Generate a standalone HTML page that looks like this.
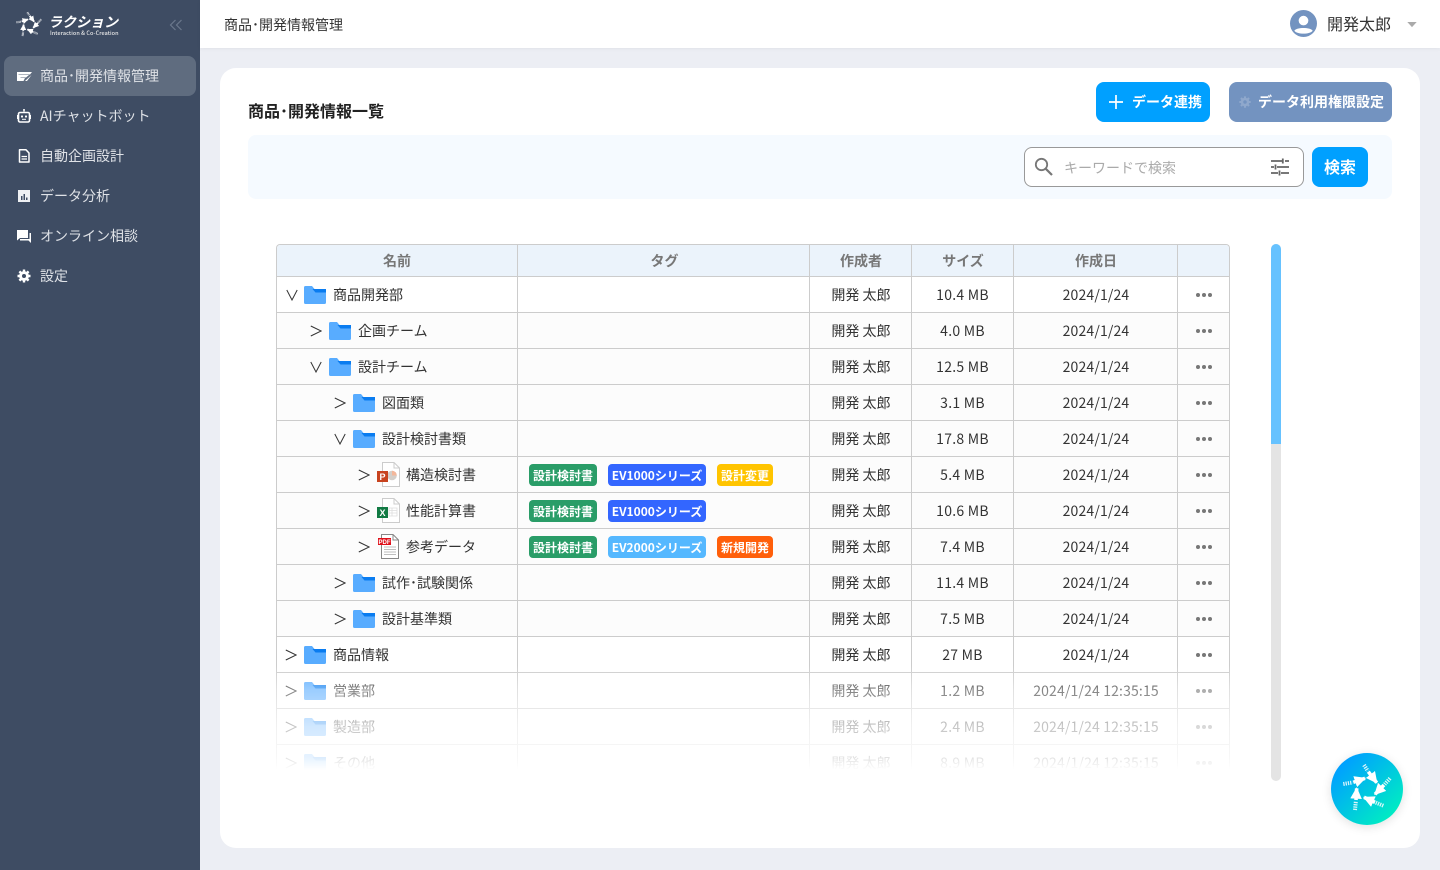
<!DOCTYPE html>
<html lang="ja"><head><meta charset="utf-8"><title>商品・開発情報管理</title>
<style>
*{box-sizing:border-box}
html,body{margin:0;padding:0;width:1440px;height:870px;overflow:hidden;background:#eceef4;font-family:"Noto Sans CJK JP","Liberation Sans",sans-serif;color:#333}
.a{position:absolute}
#side{left:0;top:0;width:200px;height:870px;background:#3e4c63}
.nav{position:absolute;left:40px;font-size:14px;line-height:20px;color:#dfe2e7;white-space:nowrap}
.ic{position:absolute;left:16px;width:16px;height:16px}
#top{left:200px;top:0;width:1240px;height:48px;background:#fff;box-shadow:0 1px 4px rgba(0,0,0,.05)}
#card{left:220px;top:68px;width:1200px;height:780px;background:#fff;border-radius:16px}
.btn{position:absolute;border-radius:8px;color:#fff;font-weight:700;font-size:14px;line-height:41px;white-space:nowrap}
#tbl{left:276px;top:244px;width:954px;height:526px;overflow:hidden;border:1px solid #ccc;border-bottom:0;border-radius:4px 4px 0 0}
.hd{position:absolute;top:0;left:0;width:952px;height:32px;background:#ebf3fb}
.hc{position:absolute;top:0;height:32px;line-height:32px;text-align:center;font-size:14px;font-weight:700;color:#777}
.v{position:absolute;top:0;width:1px;height:526px;background:#ccc;z-index:2}
.r{position:absolute;left:0;width:952px;height:36px;background:#fcfcfc;border-top:1px solid #ccc;font-size:14px;line-height:37px}
.r.w{background:#fff}
.r span{position:absolute;top:0;white-space:nowrap}
.c1{left:533.500px;width:101px;text-align:center}
.c2{left:635px;width:101px;text-align:center;letter-spacing:.25px}
.c3{left:737.500px;width:163px;text-align:center;letter-spacing:.15px}
.d{top:16px!important;width:4px;height:4px;border-radius:2px;background:#777}
.d1{left:919px}.d2{left:925px}.d3{left:931px}
.t{height:22px;top:7px!important;border-radius:4px;color:#fff;font-size:12px;font-weight:700;line-height:24px;text-align:center}
.g{background:#2a9d68;left:252px;width:68px}
.b{background:#3366ff;left:331px;width:98px}
.l{background:#55b8ff;left:331px;width:98px}
.y{background:#ffc400;left:440px;width:56px}
.o{background:#ff5f0a;left:440px;width:56px}
.r svg{position:absolute}
#fade{left:276px;top:665px;width:954px;height:106px;background:linear-gradient(to bottom,rgba(255,255,255,0) 0,rgba(255,255,255,.4) 25px,rgba(255,255,255,.72) 62px,rgba(255,255,255,.85) 92px,rgba(255,255,255,1) 105px);z-index:3}
</style></head><body>
<svg width="0" height="0" style="position:absolute"><defs>
<symbol id="f" viewBox="0 0 22 18"><path d="M1.500 0H8l2.500 3H20.500a1.500 1.500 0 0 1 1.500 1.500V16.500a1.500 1.500 0 0 1-1.500 1.500H1.500A1.500 1.500 0 0 1 0 16.500V1.500A1.500 1.500 0 0 1 1.500 0z" fill="#58acff"/><path d="M8.500 3H22V6.500H11.500z" fill="#0a7cf0"/></symbol>
<symbol id="cr" viewBox="0 0 12 12"><path d="M.8 1 11.200 6 .8 11" fill="none" stroke="#333" stroke-width="1"/></symbol>
<symbol id="dn" viewBox="0 0 12 12"><path d="M.8 1 6 11 11.200 1" fill="none" stroke="#333" stroke-width="1"/></symbol>
<marker id="h" viewBox="0 0 10 10" refX="9" refY="5" markerWidth="3.200" markerHeight="3.200" orient="auto"><path d="M0 0 10 5 0 10z" fill="#fff"/></marker>
<symbol id="arrows" viewBox="0 0 72 72"><g fill="none" stroke="#fff">
<g stroke-width="3.600"><path d="M37.300 18.700 45.700 29.700" marker-end="url(#h)"/><path d="M53 32 44 41.300" marker-end="url(#h)"/><path d="M44 49.300 33 44.300" marker-end="url(#h)"/><path d="M25 47 25.700 35.300" marker-end="url(#h)"/><path d="M22.300 29.300 34 25.300" marker-end="url(#h)"/></g>
<g stroke-width="4" stroke-dasharray="1.300 1" opacity=".85"><path d="M33 12 36.800 18"/><path d="M59 25.300 53.700 31.300"/><path d="M52.300 52.700 44.800 49.600"/><path d="M24 57 24.900 47.800"/><path d="M12.300 31 21.500 29.500"/></g>
</g></symbol>
</defs></svg>

<div id="side" class="a">
<svg class="a" style="left:9.500px;top:6px" width="38" height="38"><use href="#arrows"/></svg>
<div class="a" style="left:48px;top:11px;font-size:14px;font-weight:700;font-style:italic;color:#fff;line-height:22px;white-space:nowrap">ラクション</div>
<div class="a" style="left:50px;top:30px;font-size:5.500px;font-weight:500;line-height:6px;letter-spacing:.08px;color:#e8e8e8;white-space:nowrap">Interaction &amp; Co-Creation</div>
<svg class="a" style="left:169px;top:18px" width="14" height="14" viewBox="0 0 14 14"><path d="M6.500 2 1.500 7l5 5M12.500 2l-5 5 5 5" fill="none" stroke="#6b788c" stroke-width="1.200"/></svg>
<div class="a" style="left:4px;top:56px;width:192px;height:40px;border-radius:8px;background:#5f6c7f"></div>
<svg class="a" style="left:17px;top:72px" width="15" height="9" viewBox="0 0 15 9"><path d="M0 0H15L13 2.500H1.500V3H12L9 5.500H3.500V6H8L6.500 9H0zM14.500 3 10 9H8z" fill="#fff"/></svg>
<div class="nav" style="top:66px">商品･開発情報管理</div>
<svg class="ic" style="top:108px" viewBox="0 0 16 16"><path d="M8 1v2.500M4 4.500h8A1.500 1.500 0 0 1 13.500 6v6.500A1.500 1.500 0 0 1 12 14H4a1.500 1.500 0 0 1-1.500-1.500V6A1.500 1.500 0 0 1 4 4.500z" fill="none" stroke="#fff" stroke-width="1.600"/><path d="M1 7h1.200v4H1zM13.800 7H15v4h-1.200z" fill="#fff"/><circle cx="6" cy="8.500" r="1.100" fill="#fff"/><circle cx="10" cy="8.500" r="1.100" fill="#fff"/><path d="M6 11.300h4" stroke="#fff"/></svg>
<div class="nav" style="top:106px">AIチャットボット</div>
<svg class="ic" style="top:148px" viewBox="0 0 16 16"><path d="M3.500 1.800H10L13 5v9H3.500z" fill="none" stroke="#fff" stroke-width="1.500" stroke-linejoin="round"/><path d="M5.500 8.500h5.500M5.500 11h5.500" stroke="#fff" stroke-width="1.200"/></svg>
<div class="nav" style="top:146px">自動企画設計</div>
<svg class="ic" style="top:188px" viewBox="0 0 16 16"><path d="M2 2h12v12H2z" fill="#eef0f3"/><path d="M5 8h1.500v4H5zM7.500 6h1.500v6H7.500zM10 9.500h1.500V12H10z" fill="#3e4c63"/></svg>
<div class="nav" style="top:186px">データ分析</div>
<svg class="ic" style="top:228px" viewBox="0 0 16 16"><path d="M1 2h11v8H4l-3 2.500z" fill="#fff"/><path d="M13.500 5H15v10l-2.500-2.500H4V11h9.500z" fill="#fff"/></svg>
<div class="nav" style="top:226px">オンライン相談</div>
<svg class="ic" style="top:268px" viewBox="0 0 16 16"><circle cx="8" cy="8" r="3.600" fill="none" stroke="#fff" stroke-width="2.600"/><path d="M8 1.500v13M1.500 8h13M3.400 3.400l9.200 9.200M12.600 3.400l-9.200 9.200" stroke="#fff" stroke-width="2.400"/><circle cx="8" cy="8" r="2" fill="#3e4c63"/></svg>
<div class="nav" style="top:266px">設定</div>
</div>

<div id="top" class="a">
<div class="a" style="left:24px;top:15px;font-size:14px;line-height:20px;white-space:nowrap">商品･開発情報管理</div>
<svg class="a" style="left:1090px;top:10px" width="27" height="27" viewBox="0 0 28 28"><circle cx="14" cy="14" r="14" fill="#7393c0"/><circle cx="14" cy="11" r="5" fill="#fff"/><path d="M4.500 21.500C7 17.800 21 17.800 23.500 21.500 21 25.500 7 25.500 4.500 21.500z" fill="#fff"/></svg>
<div class="a" style="left:1127px;top:11px;font-size:16px;line-height:24px;white-space:nowrap">開発太郎</div>
<svg class="a" style="left:1207px;top:22px" width="10" height="6" viewBox="0 0 11 7"><path d="M0 0h11L5.500 6z" fill="#aaa"/></svg>
</div>

<div id="card" class="a"></div>
<div class="a" style="left:248px;top:98px;font-size:16px;font-weight:700;line-height:24px;color:#222;white-space:nowrap">商品･開発情報一覧</div>
<div class="btn" style="left:1096px;top:82px;width:114px;height:40px;background:#00a0ff"><svg class="a" style="left:13px;top:13px" width="14" height="14" viewBox="0 0 14 14"><path d="M7 0v14M0 7h14" stroke="#fff" stroke-width="1.700"/></svg><span class="a" style="left:36px;top:0">データ連携</span></div>
<div class="btn" style="left:1229px;top:82px;width:163px;height:40px;background:#7393c0"><svg class="a" style="left:9px;top:13px" width="14" height="14" viewBox="0 0 16 16"><circle cx="8" cy="8" r="3.600" fill="none" stroke="#8fa8cc" stroke-width="2.600"/><path d="M8 1.500v13M1.500 8h13M3.400 3.400l9.200 9.200M12.600 3.400l-9.200 9.200" stroke="#8fa8cc" stroke-width="2.400"/><circle cx="8" cy="8" r="2" fill="#7393c0"/></svg><span class="a" style="left:29px;top:0">データ利用権限設定</span></div>
<div class="a" style="left:248px;top:135px;width:1144px;height:64px;border-radius:8px;background:#f5faff"></div>
<div class="a" style="left:1024px;top:147px;width:280px;height:40px;border:1px solid #999;border-radius:8px;background:#fff"></div>
<svg class="a" style="left:1034px;top:157px" width="20" height="20" viewBox="0 0 20 20"><circle cx="7.500" cy="7.500" r="5.700" fill="none" stroke="#777" stroke-width="1.800"/><path d="M11.800 11.800 18 18" stroke="#777" stroke-width="2.200"/></svg>
<div class="a" style="left:1064px;top:157.500px;font-size:14px;line-height:20px;color:#aaa;white-space:nowrap">キーワードで検索</div>
<svg class="a" style="left:1270px;top:158px" width="20" height="18" viewBox="0 0 20 18"><path d="M1 3h11M15 3h4M1 9h3M7 9h12M1 15h7M11 15h8" stroke="#666" stroke-width="1.800"/><path d="M12.800 .5v5M5.500 6.500v5M9.500 12.500v5" stroke="#666" stroke-width="1.800"/></svg>
<div class="btn" style="left:1312px;top:147px;width:56px;height:40px;background:#00a0ff;font-size:16px;line-height:39px;text-align:center">検索</div>

<div id="tbl" class="a">
<div class="hd"></div>
<div class="hc" style="left:0;width:240px">名前</div>
<div class="hc" style="left:242px;width:291px">タグ</div>
<div class="hc" style="left:533.500px;width:101px">作成者</div>
<div class="hc" style="left:635.500px;width:101px">サイズ</div>
<div class="hc" style="left:737.500px;width:163px">作成日</div>
<div class="v" style="left:240px"></div><div class="v" style="left:532px"></div><div class="v" style="left:634px"></div><div class="v" style="left:736px"></div><div class="v" style="left:900px"></div>

<div class="r w" style="top:31px"><svg style="left:9px;top:12px" width="12" height="12"><use href="#dn"/></svg><svg style="left:27px;top:9px" width="22" height="18"><use href="#f"/></svg><span style="left:56px">商品開発部</span><span class="c1">開発 太郎</span><span class="c2">10.4 MB</span><span class="c3">2024/1/24</span><span class="d d1"></span><span class="d d2"></span><span class="d d3"></span></div>
<div class="r" style="top:67px"><svg style="left:33px;top:12px" width="12" height="12"><use href="#cr"/></svg><svg style="left:52px;top:9px" width="22" height="18"><use href="#f"/></svg><span style="left:81px">企画チーム</span><span class="c1">開発 太郎</span><span class="c2">4.0 MB</span><span class="c3">2024/1/24</span><span class="d d1"></span><span class="d d2"></span><span class="d d3"></span></div>
<div class="r" style="top:103px"><svg style="left:33px;top:12px" width="12" height="12"><use href="#dn"/></svg><svg style="left:52px;top:9px" width="22" height="18"><use href="#f"/></svg><span style="left:81px">設計チーム</span><span class="c1">開発 太郎</span><span class="c2">12.5 MB</span><span class="c3">2024/1/24</span><span class="d d1"></span><span class="d d2"></span><span class="d d3"></span></div>
<div class="r" style="top:139px"><svg style="left:57px;top:12px" width="12" height="12"><use href="#cr"/></svg><svg style="left:76px;top:9px" width="22" height="18"><use href="#f"/></svg><span style="left:105px">図面類</span><span class="c1">開発 太郎</span><span class="c2">3.1 MB</span><span class="c3">2024/1/24</span><span class="d d1"></span><span class="d d2"></span><span class="d d3"></span></div>
<div class="r" style="top:175px"><svg style="left:57px;top:12px" width="12" height="12"><use href="#dn"/></svg><svg style="left:76px;top:9px" width="22" height="18"><use href="#f"/></svg><span style="left:105px">設計検討書類</span><span class="c1">開発 太郎</span><span class="c2">17.8 MB</span><span class="c3">2024/1/24</span><span class="d d1"></span><span class="d d2"></span><span class="d d3"></span></div>
<div class="r" style="top:211px"><svg style="left:81px;top:12px" width="12" height="12"><use href="#cr"/></svg><svg style="left:100px;top:5px" width="23" height="25" viewBox="0 0 23 25"><path d="M5.500.5H17L22.500 6V24.500H5.500z" fill="#fff" stroke="#ccc"/><path d="M17 .5V6h5.500" fill="none" stroke="#ccc"/><circle cx="15" cy="13.500" r="4.800" fill="#d3cfca"/><path d="M15 8.700a4.800 4.800 0 0 1 4.800 4.800H15z" fill="#f4b79a"/><rect x="0" y="9" width="11" height="11" fill="#c8431f"/><text x="5.500" y="18" font-size="9" font-weight="700" fill="#fff" text-anchor="middle" font-family="Liberation Sans">P</text></svg><span style="left:129px">構造検討書</span><span class="t g">設計検討書</span><span class="t b">EV1000シリーズ</span><span class="t y">設計変更</span><span class="c1">開発 太郎</span><span class="c2">5.4 MB</span><span class="c3">2024/1/24</span><span class="d d1"></span><span class="d d2"></span><span class="d d3"></span></div>
<div class="r" style="top:247px"><svg style="left:81px;top:12px" width="12" height="12"><use href="#cr"/></svg><svg style="left:100px;top:5px" width="23" height="25" viewBox="0 0 23 25"><path d="M5.500.5H17L22.500 6V24.500H5.500z" fill="#fff" stroke="#ccc"/><path d="M17 .5V6h5.500" fill="none" stroke="#ccc"/><path d="M12 10h8v8h-8zM12 12.500h8M12 15h8M15 10v8" fill="none" stroke="#ddd" stroke-width=".8"/><rect x="0" y="9" width="11" height="11" fill="#117a43"/><text x="5.500" y="18" font-size="9" font-weight="700" fill="#fff" text-anchor="middle" font-family="Liberation Sans">X</text></svg><span style="left:129px">性能計算書</span><span class="t g">設計検討書</span><span class="t b">EV1000シリーズ</span><span class="c1">開発 太郎</span><span class="c2">10.6 MB</span><span class="c3">2024/1/24</span><span class="d d1"></span><span class="d d2"></span><span class="d d3"></span></div>
<div class="r" style="top:283px"><svg style="left:81px;top:12px" width="12" height="12"><use href="#cr"/></svg><svg style="left:100px;top:5px" width="23" height="25" viewBox="0 0 23 25"><path d="M4.500.5H16L21.500 6V24.500H4.500z" fill="#fff" stroke="#888"/><path d="M16 .5V6h5.500" fill="none" stroke="#888"/><path d="M7 13h12M7 15.500h12M7 18h12M7 20.500h12" stroke="#aaa" stroke-width=".8"/><rect x="1" y="4" width="13" height="7" fill="#e0101a"/><text x="7.500" y="10" font-size="6" font-weight="700" fill="#fff" text-anchor="middle" font-family="Liberation Sans">PDF</text></svg><span style="left:129px">参考データ</span><span class="t g">設計検討書</span><span class="t l">EV2000シリーズ</span><span class="t o">新規開発</span><span class="c1">開発 太郎</span><span class="c2">7.4 MB</span><span class="c3">2024/1/24</span><span class="d d1"></span><span class="d d2"></span><span class="d d3"></span></div>
<div class="r" style="top:319px"><svg style="left:57px;top:12px" width="12" height="12"><use href="#cr"/></svg><svg style="left:76px;top:9px" width="22" height="18"><use href="#f"/></svg><span style="left:105px">試作･試験関係</span><span class="c1">開発 太郎</span><span class="c2">11.4 MB</span><span class="c3">2024/1/24</span><span class="d d1"></span><span class="d d2"></span><span class="d d3"></span></div>
<div class="r" style="top:355px"><svg style="left:57px;top:12px" width="12" height="12"><use href="#cr"/></svg><svg style="left:76px;top:9px" width="22" height="18"><use href="#f"/></svg><span style="left:105px">設計基準類</span><span class="c1">開発 太郎</span><span class="c2">7.5 MB</span><span class="c3">2024/1/24</span><span class="d d1"></span><span class="d d2"></span><span class="d d3"></span></div>
<div class="r w" style="top:391px"><svg style="left:8px;top:12px" width="12" height="12"><use href="#cr"/></svg><svg style="left:27px;top:9px" width="22" height="18"><use href="#f"/></svg><span style="left:56px">商品情報</span><span class="c1">開発 太郎</span><span class="c2">27 MB</span><span class="c3">2024/1/24</span><span class="d d1"></span><span class="d d2"></span><span class="d d3"></span></div>
<div class="r w" style="top:427px"><svg style="left:8px;top:12px" width="12" height="12"><use href="#cr"/></svg><svg style="left:27px;top:9px" width="22" height="18"><use href="#f"/></svg><span style="left:56px">営業部</span><span class="c1">開発 太郎</span><span class="c2">1.2 MB</span><span class="c3">2024/1/24 12:35:15</span><span class="d d1"></span><span class="d d2"></span><span class="d d3"></span></div>
<div class="r w" style="top:463px"><svg style="left:8px;top:12px" width="12" height="12"><use href="#cr"/></svg><svg style="left:27px;top:9px" width="22" height="18"><use href="#f"/></svg><span style="left:56px">製造部</span><span class="c1">開発 太郎</span><span class="c2">2.4 MB</span><span class="c3">2024/1/24 12:35:15</span><span class="d d1"></span><span class="d d2"></span><span class="d d3"></span></div>
<div class="r w" style="top:499px"><svg style="left:8px;top:12px" width="12" height="12"><use href="#cr"/></svg><svg style="left:27px;top:9px" width="22" height="18"><use href="#f"/></svg><span style="left:56px">その他</span><span class="c1">開発 太郎</span><span class="c2">8.9 MB</span><span class="c3">2024/1/24 12:35:15</span><span class="d d1"></span><span class="d d2"></span><span class="d d3"></span></div>
</div>
<div id="fade" class="a"></div>
<div class="a" style="left:270px;top:770px;width:970px;height:10px;background:#fff;z-index:4"></div>

<div class="a" style="left:1271px;top:244px;width:10px;height:537px;border-radius:5px;background:#e4e4e4;z-index:5"></div>
<div class="a" style="left:1271px;top:244px;width:10px;height:200px;border-radius:5px 5px 0 0;background:#66c2ff;z-index:6"></div>

<div class="a" style="left:1331px;top:753px;width:72px;height:72px;border-radius:50%;background:linear-gradient(135deg,#00a0ff 15%,#00f0c0 90%);box-shadow:0 2px 10px rgba(0,0,0,.12);z-index:7"><svg width="72" height="72"><use href="#arrows"/></svg></div>
</body></html>
